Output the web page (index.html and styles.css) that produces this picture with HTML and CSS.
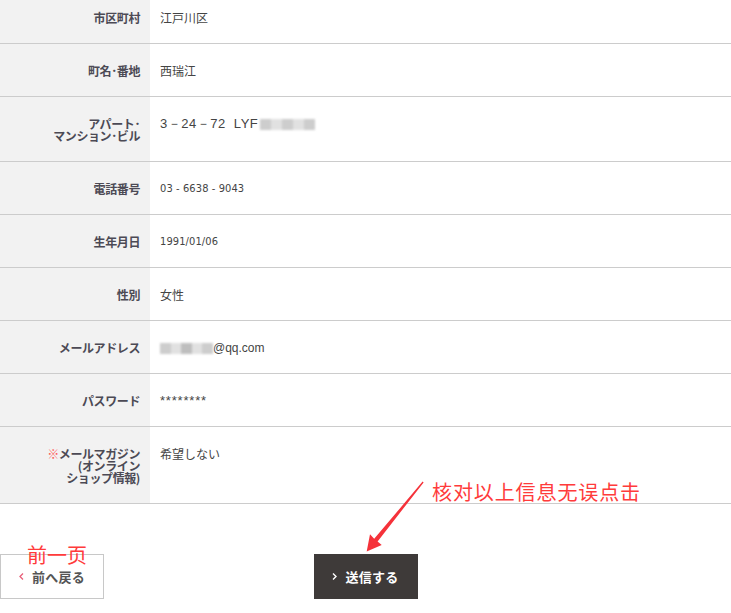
FILE: index.html
```html
<!DOCTYPE html>
<html lang="ja">
<head>
<meta charset="utf-8">
<title>確認</title>
<link rel="stylesheet" href="styles.css">
</head>
<body>
<div class="page">
  <table class="confirm">
    <tr><th>市区町村</th><td>江戸川区</td></tr>
    <tr><th>町名･番地</th><td>西瑞江</td></tr>
    <tr><th>アパート･<br>マンション･ビル</th><td><span class="addr">3－24－72&nbsp;&nbsp;LYF</span><span class="blur blur-addr"><i></i><i></i><i></i><i></i><i></i></span></td></tr>
    <tr><th>電話番号</th><td class="num">03 - 6638 - 9043</td></tr>
    <tr><th>生年月日</th><td class="num">1991/01/06</td></tr>
    <tr><th>性別</th><td>女性</td></tr>
    <tr><th>メールアドレス</th><td><span class="blur blur-mail"><i></i><i></i><i></i><i></i><i></i></span><span class="latin">@qq.com</span></td></tr>
    <tr><th>パスワード</th><td><span class="latin stars">********</span></td></tr>
    <tr><th><span class="mark">※</span>メールマガジン<br>(オンライン<br>ショップ情報)</th><td>希望しない</td></tr>
  </table>

  <div class="actions">
    <a class="btn btn-back" href="#"><svg class="chev" width="5" height="7" viewBox="0 0 5 7"><path d="M4 0.5 L1 3.5 L4 6.5" fill="none" stroke="#e8607a" stroke-width="1.3"/></svg>前へ戻る</a>
    <a class="btn btn-send" href="#"><svg class="chev" width="5" height="7" viewBox="0 0 5 7"><path d="M1 0.5 L4 3.5 L1 6.5" fill="none" stroke="#ffffff" stroke-width="1.4"/></svg>送信する</a>
  </div>

  <div class="note note-back">前一页</div>
  <div class="note note-send">核对以上信息无误点击</div>
  <svg class="arrow" width="731" height="613" viewBox="0 0 731 613">
    <polygon fill="#f5323a" points="422.6,481.6 374.2,538.8 370,534.3 366.7,551.5 381.7,545 377.6,541.5 423.6,482.4"/>
  </svg>
</div>
</body>
</html>
```

FILE: styles.css
```css
html, body {
  margin: 0;
  padding: 0;
  background: #ffffff;
}
body {
  font-family: "Liberation Sans", "Noto Sans CJK JP", sans-serif;
  overflow: hidden;
}
.page {
  position: relative;
  width: 731px;
  height: 613px;
  overflow: hidden;
}
.confirm {
  width: 731px;
  border-collapse: collapse;
  margin-top: -9px;
}
.confirm tr {
  border-bottom: 1px solid #cccccc;
}
.confirm th {
  width: 130px;
  background: #f2f2f2;
  text-align: right;
  vertical-align: top;
  padding: 21px 10px 19px 10px;
  font-size: 12px;
  line-height: 12px;
  font-weight: bold;
  color: #4c4a55;
  font-family: "Noto Sans CJK JP", sans-serif;
  letter-spacing: -0.4px;
}
.confirm td {
  vertical-align: top;
  padding: 21px 10px 19px 10px;
  font-size: 12px;
  line-height: 12px;
  color: #444444;
  font-family: "Noto Sans CJK JP", sans-serif;
}
.confirm th span,
.confirm td span {
  vertical-align: top;
}
.confirm td.num {
  font-family: "DejaVu Sans Condensed", "Liberation Sans Narrow", "Liberation Sans", sans-serif;
  font-size: 11px;
  letter-spacing: 0.1px;
  color: #444;
}
.latin {
  font-family: "Liberation Sans", sans-serif;
  font-size: 12px;
  line-height: 12px;
  color: #444;
}
.stars {
  font-size: 13px;
  letter-spacing: 0.8px;
  line-height: 12px;
}
.addr {
  font-family: "Liberation Sans", sans-serif;
  font-size: 13px;
  line-height: 12px;
  letter-spacing: 0.5px;
}
.mark {
  color: #ff5a5a;
  font-weight: normal;
}
.blur {
  display: inline-flex;
  height: 11px;
  margin-top: 1px;
  filter: blur(1.2px);
  opacity: 0.9;
}
.blur i {
  display: block;
  height: 100%;
  background: #c8c8c8;
}
.blur i:nth-child(2n) { background: #dedede; }
.blur-addr { margin-left: 2px; }
.blur-addr i { width: 11px; }
.blur-mail i { width: 10.6px; }
.blur-mail i:nth-child(3) { background: #b8b8b8; }

.actions {
  display: grid;
  grid-template-columns: 1fr auto 1fr;
  margin-top: 50px;
}
.btn {
  box-sizing: border-box;
  height: 45px;
  width: 104px;
  display: flex;
  align-items: center;
  justify-content: center;
  gap: 8px;
  text-decoration: none;
  font-family: "Noto Sans CJK JP", sans-serif;
  font-size: 13px;
  font-weight: bold;
  letter-spacing: 0.3px;
}
.btn-back {
  justify-self: start;
  border: 1px solid #c8c8c8;
  background: #fff;
  color: #555555;
}
.btn-send {
  background: #3e3a39;
  color: #ffffff;
}
.chev {
  display: block;
}
.note {
  position: absolute;
  color: #ff3b3b;
  font-family: "Noto Sans CJK SC", sans-serif;
  font-size: 20px;
  line-height: 20px;
  white-space: nowrap;
}
.note-back {
  left: 27px;
  top: 545px;
}
.note-send {
  left: 432px;
  top: 482px;
  letter-spacing: 0.9px;
}
.arrow {
  position: absolute;
  left: 0;
  top: 0;
  pointer-events: none;
}
```
